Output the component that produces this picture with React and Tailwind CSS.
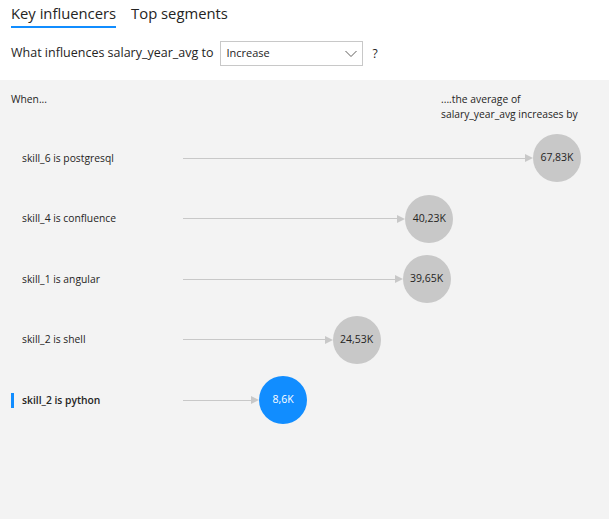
import React from "react";

const rows = [
  { label: "skill_6 is postgresql", value: 67.83, text: "67,83K" },
  { label: "skill_4 is confluence", value: 40.23, text: "40,23K" },
  { label: "skill_1 is angular", value: 39.65, text: "39,65K" },
  { label: "skill_2 is shell", value: 24.53, text: "24,53K" },
  { label: "skill_2 is python", value: 8.6, text: "8,6K", selected: true },
];

function centerX(v) {
  return 283 + (v - 8.6) * 4.626;
}

export default function App() {
  return (
    <div
      className="w-[611px] h-[519px] bg-white text-[#252423] overflow-hidden flex flex-col"
      style={{ fontFamily: '"Segoe UI", "Open Sans", sans-serif' }}
    >
      <div className="flex gap-[15px] pl-[11px] h-[30px]">
        <div className="text-[14.8px] leading-[24px] border-b-2 border-[#118dff] h-[28px] pt-[1px]">Key influencers</div>
        <div className="text-[14.8px] leading-[24px] pt-[1px]">Top segments</div>
      </div>
      <div className="flex items-center pl-[11px] mt-[11px] h-[25px]">
        <span className="text-[12.5px]">What influences salary_year_avg to</span>
        <div className="ml-[7px] w-[143px] h-[25px] border border-[#c8c8c8] flex items-center justify-between pl-[5px] pr-[5px]">
          <span className="text-[11px]">Increase</span>
          <svg width="12" height="8" viewBox="0 0 12 8">
            <path d="M0.5 1 L6 6.5 L11.5 1" fill="none" stroke="#605e5c" strokeWidth="1" />
          </svg>
        </div>
        <span className="ml-[9px] text-[12px]">?</span>
      </div>
      <div className="mt-[14px] flex-1 bg-[#f3f3f3] mr-[2px] relative">
        <div className="flex justify-between pl-[11px] pt-[12px] text-[10.3px] leading-[15px]">
          <div>When...</div>
          <div className="w-[170px] mr-[-2px]">
            ....the average of
            <br />
            salary_year_avg increases by
          </div>
        </div>
        <div className="flex flex-col mt-[6px]">
          {rows.map((r) => {
            const cx = centerX(r.value);
            const left = cx - 24;
            const lineW = left - 183 - 8;
            return (
              <div key={r.label} className="flex items-center h-[60.5px]">
                <div className="w-[183px] flex items-center pl-[11px]">
                  <div className={`w-[3px] h-[15px] ${r.selected ? "bg-[#118dff]" : "bg-transparent"}`} />
                  <span className={`ml-[8px] text-[10.3px] ${r.selected ? "font-semibold" : ""}`}>{r.label}</span>
                </div>
                <div className="h-[1px] bg-[#c8c8c8]" style={{ width: lineW }} />
                <svg width="8" height="8" viewBox="0 0 8 8">
                  <path d="M0 0 L8 4 L0 8 Z" fill="#c8c8c8" />
                </svg>
                <div
                  className={`w-[48px] h-[48px] rounded-full flex items-center justify-center text-[10.5px] ${
                    r.selected ? "bg-[#118dff] text-white" : "bg-[#c8c8c8] text-[#252423]"
                  }`}
                >
                  {r.text}
                </div>
              </div>
            );
          })}
        </div>
      </div>
    </div>
  );
}
